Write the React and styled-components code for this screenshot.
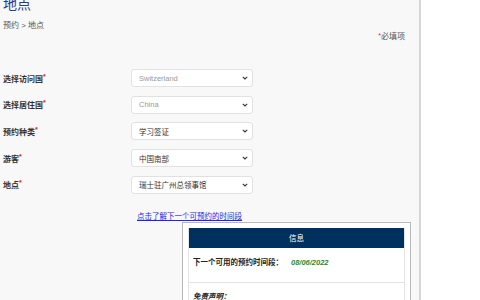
import styled, { createGlobalStyle } from "styled-components";

const Global = createGlobalStyle`
  html, body {
    margin: 0;
    padding: 0;
    background: #ffffff;
    font-family: "Liberation Sans", "Noto Sans CJK SC", sans-serif;
    overflow: hidden;
  }
`;

const Page = styled.div`
  display: flex;
  width: 480px;
  height: 300px;
  overflow: hidden;
`;

const Main = styled.div`
  width: 421px;
  height: 300px;
  background: #f9f8f8;
  border-right: 2px solid #d6d4d4;
  padding: 0 14px 0 3px;
  box-sizing: border-box;
  flex-shrink: 0;
`;

const Title = styled.h1`
  margin: -4px 0 0;
  font-size: 14px;
  font-weight: normal;
  color: #2b3a8c;
  line-height: 16px;
`;

const Crumbs = styled.div`
  margin-top: 9px;
  font-size: 8px;
  color: #555;
  line-height: 10px;
`;

const Required = styled.div`
  margin-top: 1px;
  text-align: right;
  font-size: 8px;
  color: #555;
  line-height: 10px;
`;

const Star = styled.span`
  color: #e4161b;
  font-size: 7px;
  vertical-align: top;
  line-height: 7px;
`;

const Form = styled.div`
  margin-top: 27px;
  display: flex;
  flex-direction: column;
  gap: 8.7px;
`;

const Row = styled.div`
  display: grid;
  grid-template-columns: 128px 122px;
  align-items: center;
  height: 18px;
`;

const Label = styled.div`
  font-size: 8px;
  font-weight: bold;
  color: #333;
`;

const Select = styled.div`
  height: 18px;
  box-sizing: border-box;
  background: #fff;
  border: 1px solid #e2e0e0;
  border-radius: 3px;
  display: flex;
  align-items: center;
  justify-content: space-between;
  padding: 0 4px 0 7px;
  font-size: 7.5px;
  color: ${(p) => (p.$muted ? "#9a9a9a" : "#333")};
`;

const LinkRow = styled.div`
  margin-top: 18px;
  padding-left: 134px;
  font-size: 7.5px;
  line-height: 9px;
`;

const Link = styled.a`
  color: #2222ee;
  text-decoration: underline;
`;

const InfoBox = styled.div`
  margin: 1px 0 0 179px;
  width: 229px;
  background: #fff;
  border: 1px solid #b9b9b9;
  padding: 5px 5px 0;
  box-sizing: border-box;
`;

const Panel = styled.div`
  border: 1px solid #e3e3e3;
  border-top: none;
`;

const Header = styled.div`
  height: 20px;
  background: #00305e;
  color: #fff;
  font-size: 7.5px;
  display: flex;
  align-items: center;
  justify-content: center;
`;

const InfoRow = styled.div`
  padding: 8px 4px 0;
  height: 26px;
  border-bottom: 1px solid #e3e3e3;
  font-size: 7.5px;
  font-weight: bold;
  color: #222;
`;

const DateText = styled.span`
  margin-left: 8px;
  color: #1f8a1f;
  font-style: italic;
`;

const Disclaimer = styled.div`
  padding: 7px 4px 6px;
  font-size: 7.5px;
  font-weight: bold;
  font-style: italic;
  text-decoration: underline;
  color: #222;
`;

const Chevron = () => (
  <svg width="6" height="4" viewBox="0 0 6 4">
    <path d="M0.8 0.8 L3 3 L5.2 0.8" fill="none" stroke="#333" strokeWidth="1.1" />
  </svg>
);

const rows = [
  { label: "选择访问国", value: "Switzerland", muted: true },
  { label: "选择居住国", value: "China", muted: true },
  { label: "预约种类", value: "学习签证" },
  { label: "游客", value: "中国南部" },
  { label: "地点", value: "瑞士驻广州总领事馆" },
];

export default function App() {
  return (
    <Page>
      <Global />
      <Main>
        <Title>地点</Title>
        <Crumbs>预约 &gt; 地点</Crumbs>
        <Required>
          <Star>*</Star>必填项
        </Required>
        <Form>
          {rows.map((r) => (
            <Row key={r.label}>
              <Label>
                {r.label}
                <Star>*</Star>
              </Label>
              <Select $muted={r.muted}>
                <span>{r.value}</span>
                <Chevron />
              </Select>
            </Row>
          ))}
        </Form>
        <LinkRow>
          <Link href="#">点击了解下一个可预约的时间段</Link>
        </LinkRow>
        <InfoBox>
          <Panel>
            <Header>信息</Header>
            <InfoRow>
              下一个可用的预约时间段：<DateText>08/06/2022</DateText>
            </InfoRow>
            <Disclaimer>免责声明：</Disclaimer>
          </Panel>
        </InfoBox>
      </Main>
    </Page>
  );
}
